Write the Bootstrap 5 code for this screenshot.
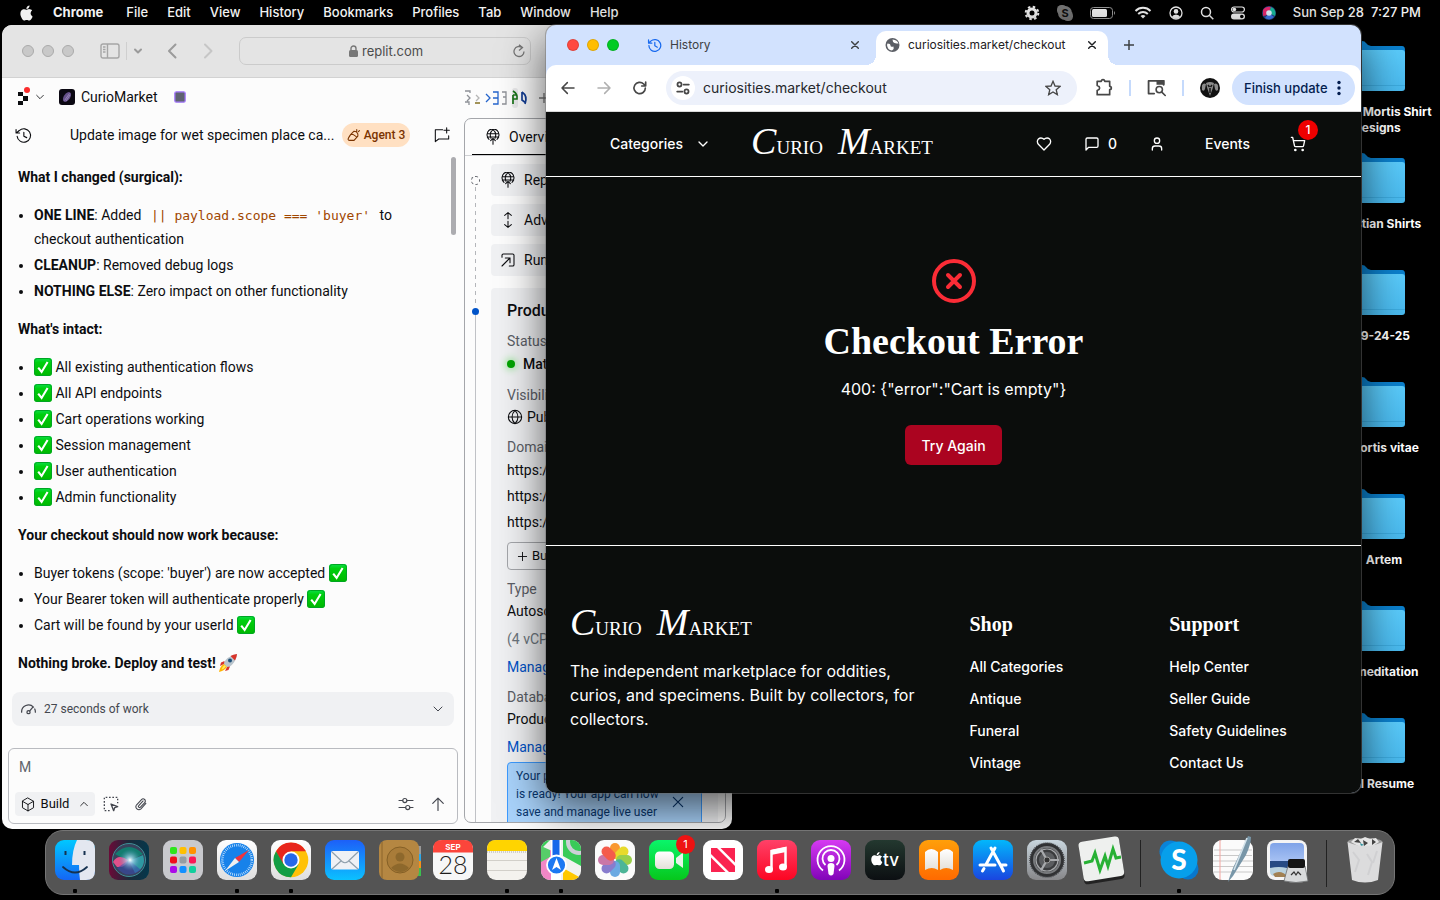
<!DOCTYPE html>
<html lang="en">
<head>
<meta charset="utf-8">
<meta name="viewport" content="width=device-width, initial-scale=1">
<title>Desktop</title>
<link href="https://cdn.jsdelivr.net/npm/bootstrap@5.3.0/dist/css/bootstrap.min.css" rel="stylesheet">
<script src="https://cdn.jsdelivr.net/npm/bootstrap@5.3.0/dist/js/bootstrap.bundle.min.js"></script>
<style>
  body { background: #000; font-family: Inter, "Liberation Sans", sans-serif; font-size: 14px; line-height: 20px; }
  a { color: inherit; text-decoration: none; }
  button { border: 0; background: none; padding: 0; color: inherit; font: inherit; }
  svg { display: block; flex: none; }
  .ln { fill: none; stroke: currentColor; stroke-width: 2; stroke-linecap: round; stroke-linejoin: round; }
  .thin { stroke-width: 1.6; }
  .desk { position: relative; height: 100vh; overflow: hidden; }

  /* menu bar */
  .menubar { height: 25px; padding: 0 19px; color: #f2f2f2; font-size: 13px; font-weight: 500; line-height: 23px; }
  .menus { gap: 19px; }
  .extras { gap: 17px; }

  /* desktop folders */
  .folders { position: absolute; top: 41px; right: 0; width: 112px; color: #fff; font-size: 12px; font-weight: 700; line-height: 16px; text-align: center; white-space: nowrap; }
  .folder { height: 112px; }
  .folder svg { margin: 0 auto 12px; }

  /* windows */
  .win { position: absolute; overflow: hidden; }
  .light { width: 12px; height: 12px; border-radius: 50%; border: 1px solid rgba(0,0,0,.12); }
  .win-back { left: 2px; top: 25px; bottom: 71px; right: 708px; background: #fcfcfc; border-radius: 10px; font-family: Roboto, "Noto Sans", sans-serif; color: #0c0d10; }
  .win-back .light { background: #c8c8c8; border-color: #aaa; }
  .win-front { left: 546px; right: 79px; top: 25px; bottom: 107px; background: #d2e2fe; border-radius: 10px; box-shadow: 0 0 0 1px rgba(110,110,110,.45), 0 14px 45px rgba(0,0,0,.65); }

  .safari-bar { height: 53px; background: #e4e4e4; border-bottom: 1px solid #d2d2d2; color: #9b9b9b; padding: 0 20px; }
  .side-icon { margin-left: 26px; }
  .bar-sep { width: 1px; height: 18px; margin: 0 6px; background: #cfcfcf; }
  .safari-url { width: 292px; height: 28px; padding-left: 28px; border: 1px solid #cbcbcb; border-radius: 7px; color: #4c4c4c; }
  .safari-url input { width: 66px; border: 0; background: none; padding: 0; color: inherit; font: 400 13px Inter, sans-serif; outline: 0; }

  .chat { width: 456px; }
  .apprail { height: 38px; padding-left: 15px; }
  .titlerow { height: 38px; padding-left: 13px; }
  .chat-title { width: 264px; white-space: nowrap; }
  .agent { width: 68px; height: 24px; border-radius: 12px; background: #ffe0c2; color: #7a3300; font-size: 12px; font-weight: 500; }
  .scrollthumb { position: absolute; left: 449px; top: 132px; width: 5px; height: 78px; border-radius: 3px; background: #acacb0; }
  .prose { padding: 11px 16px 0; font-size: 14px; line-height: 24px; }
  .prose p { margin: 0 0 14px; font-weight: 700; }
  .prose ul { margin: 0 0 14px; padding-left: 16px; }
  .prose li + li { margin-top: 2px; }
  .prose b { font-weight: 700; }
  .prose svg { display: inline-block; vertical-align: -4px; }
  .prose code { font: 13px/20px "DejaVu Sans Mono", monospace; color: #a04600; padding: 0 6px; }
  .workbar { height: 34px; margin: 3px 4px 22px 10px; padding: 0 10px 0 9px; border-radius: 8px; background: #f0f1f3; color: #44474f; font-size: 12px; }
  .composer { margin: 0 0 0 6px; width: 450px; height: 76px; border: 1px solid #b9bbc0; border-radius: 6px; }
  .composer textarea { height: 43px; border: 0; background: none; resize: none; padding: 8px 10px; color: #60646c; font: 14px/20px Roboto, sans-serif; outline: 0; }
  .composer .tools { padding: 0 11px 0 6px; color: #44474f; }
  .build { width: 80px; height: 24px; padding: 0 6px; border-radius: 4px; background: #f0f1f3; color: #0c0d10; font-size: 13px; }

  .tabs-mini { height: 38px; color: #8d9096; padding-top: 2px; }
  .panel { border: 1px solid #a4a6aa; border-radius: 7px; margin: 2px 6px 6px 6px; overflow: hidden; }
  .panel-tab { height: 37px; border-bottom: 1px solid #cfd0d3; padding-left: 7px; }
  .panel-tab a { width: 200px; padding-left: 13px; gap: 8px; border-bottom: 1px solid #000; }
  .rail { width: 26px; padding: 20px 6px 0 0; }
  .rail-dot { width: 9px; height: 9px; border: 1px dashed #5f6269; border-radius: 50%; }
  .rail-dash { width: 1px; height: 119px; background: repeating-linear-gradient(#b4b6ba 0 4px, transparent 4px 8px); margin: 2px 0; }
  .rail-now { width: 7px; height: 7px; border-radius: 50%; background: #0053c8; }
  .rail-line { width: 1px; background: #c0c2c6; }
  .cards { padding: 8px 7px 0 0; }
  .opt { height: 32px; margin-bottom: 8px; padding-left: 9px; gap: 8px; border-radius: 4px; background: #f0f1f3; }
  .deploy { margin-top: 12px; padding: 11px 16px 0; border-radius: 4px; background: #f0f1f3; white-space: nowrap; line-height: 24px; }
  .deploy h2 { font-size: 16px; line-height: 24px; font-weight: 500; margin: 0 0 8px; }
  .lbl { line-height: 20px; color: #5b5e66; margin: 0; }
  .tall { line-height: 26px; }
  .glow { width: 8px; height: 8px; border-radius: 50%; background: #00a300; box-shadow: 0 0 7px 2px #a5e6a5; }
  .buy { display: flex; width: 140px; height: 28px; border: 1px solid #a4a6aa; border-radius: 4px; padding-left: 9px; font-size: 13px; margin: 7px 0 9px; }
  .bluelink { color: #0053c8; display: block; }
  .notice { width: 195px; margin-top: 3px; padding: 4px 8px 8px; border: 1px solid #3d9bff; border-radius: 4px; background: #a9d3fb; color: #08376f; font-size: 12px; line-height: 18px; }

  /* front browser */
  .strip { height: 40px; padding-left: 21px; color: #3d4043; font-size: 12px; font-weight: 500; }
  .strip .light:nth-child(1) { background: #ff4940; } .strip .light:nth-child(2) { background: #ffbd00; } .strip .light:nth-child(3) { background: #00cb24; }
  .tab-idle { width: 213px; margin-left: 28px; font-weight: 400; }
  .tab-live { position: relative; width: 232px; height: 34px; margin-left: 16px; padding: 0 11px 6px 9px; border-radius: 10px 10px 0 0; background: #fff; color: #1e2023; font-weight: 400; }
  .tab-live::before, .tab-live::after { content: ""; position: absolute; bottom: 0; width: 10px; height: 10px; }
  .tab-live::before { left: -10px; background: radial-gradient(circle at 0 0, transparent 10px, #fff 10px); }
  .tab-live::after { right: -10px; background: radial-gradient(circle at 100% 0, transparent 10px, #fff 10px); }
  .tools-row { height: 47px; background: #fff; border-radius: 10px 10px 0 0; border-bottom: 1px solid #d8d8d8; padding: 0 6px 0 14px; color: #474747; }
  .omni { height: 34px; border-radius: 17px; background: #edf1fb; margin-left: 18px; padding: 0 16px 0 5px; }
  .omni input { border: 0; background: none; padding: 0; outline: 0; font-size: 14px; color: #26282b; min-width: 0; }
  .siteinfo { width: 24px; height: 24px; border-radius: 50%; background: #fff; margin-right: 8px; }
  .vsep { width: 2px; height: 16px; background: #c5dafc; }
  .finish { width: 123px; height: 34px; border-radius: 17px; background: #d2e2fe; color: #041e50; font-size: 13px; font-weight: 500; padding: 0 12px; }

  .site { background: #0b0d0c; color: #fff; }
  .site-nav { height: 65px; border-bottom: 1px solid #fff; padding: 0 55px 0 64px; font-weight: 500; }
  .site-nav .logo { margin-left: 40px; }
  .cats { gap: 12px; }
  .logo { font-family: "Liberation Serif", serif; font-size: 19px; line-height: 24px; gap: 15px; width: 182px; font-weight: 400; }
  .logo i { font-size: 38px; }
  .msg, .acct { margin-left: 32px; }
  .evt, .cart { margin-left: 40px; }
  .cart-badge { position: absolute; left: 8px; top: -24px; width: 20px; height: 20px; border-radius: 50%; background: #ef0000; font-size: 12px; line-height: 20px; }
  .cart .cart-badge { top: -16px; }
  .cart { height: 16px; }
  .cart .cart-badge { top: -24px; }
  .error-box { padding: 80px 16px; border-bottom: 1px solid #fff; }
  .serif { font-family: "Liberation Serif", serif; font-weight: 700; }
  .error-box h1 { font-size: 38px; line-height: 40px; margin: 16px 0; }
  .error-box p { font-size: 16px; line-height: 24px; margin: 0 0 24px; }
  .retry { height: 40px; padding: 0 15px; border-radius: 6px; background: #ab0420; color: #fff; font-weight: 500; font-size: 14px; }
  .retry:hover { background: #c00a28; color: #fff; }
  .site-foot { padding: 64px 24px 0; }
  .site-foot .row { --bs-gutter-x: 32px; }
  .site-foot .about { font-size: 16px; line-height: 24px; margin: 18px 0 0; }
  .site-foot h3 { font-size: 20px; line-height: 28px; margin: 0 0 19px; }
  .site-foot li { line-height: 20px; margin-bottom: 12px; font-weight: 500; }
  .site-nav .cart-badge { top: -24px; }
  .site-nav a.cart > .cart-badge { top: -16px; }

  /* dock */
  .dock-wrap { position: absolute; left: 0; right: 0; bottom: 5px; }
  .dock { height: 65px; padding: 9px 9px 0; gap: 14px; border-radius: 18px; background: #545454; border: 1px solid #757575; }
  .dock button { position: relative; width: 40px; height: 40px; }
  .dock svg { width: 40px; height: 40px; overflow: visible; }
  .dock .on::after { content: ""; position: absolute; left: 18px; top: 49px; width: 4px; height: 4px; border-radius: 1px; background: #000; }
  .dock-sep { width: 10px; height: 47px; background: linear-gradient(#222, #222) center / 1px 100% no-repeat; }
  .dock-badge { position: absolute; right: -6px; top: -5px; width: 19px; height: 19px; border-radius: 50%; background: #ee1212; color: #fff; font-size: 11px; line-height: 19px; }
</style>
</head>
<body>
<svg width="0" height="0" class="position-absolute" aria-hidden="true">
  <defs>
    <linearGradient id="gGreen" x2="0" y2="1"><stop offset="0" stop-color="#0be04b"/><stop offset=".25" stop-color="#00cf0f"/><stop offset="1" stop-color="#00b800"/></linearGradient>
    <linearGradient id="gFolder" x2="0" y2="1"><stop offset="0" stop-color="#5acbfb"/><stop offset="1" stop-color="#49b9ee"/></linearGradient>
    <linearGradient id="gFinder" x2="0" y2="1"><stop offset="0" stop-color="#00c8ff"/><stop offset="1" stop-color="#1466f5"/></linearGradient>
    <linearGradient id="gWhite" x2="0" y2="1"><stop offset="0" stop-color="#fff"/><stop offset="1" stop-color="#dedede"/></linearGradient>
    <linearGradient id="gMail" x2="0" y2="1"><stop offset="0" stop-color="#1d5ff8"/><stop offset="1" stop-color="#0bc1ff"/></linearGradient>
    <linearGradient id="gTime" x2="0" y2="1"><stop offset="0" stop-color="#0af56a"/><stop offset="1" stop-color="#06c71c"/></linearGradient>
    <linearGradient id="gMusic" x2="0" y2="1"><stop offset="0" stop-color="#ff4168"/><stop offset="1" stop-color="#fc0522"/></linearGradient>
    <linearGradient id="gPod" x2="0" y2="1"><stop offset="0" stop-color="#d63af2"/><stop offset="1" stop-color="#8104b8"/></linearGradient>
    <linearGradient id="gTv" x2="0" y2="1"><stop offset="0" stop-color="#23382f"/><stop offset="1" stop-color="#0c0f12"/></linearGradient>
    <linearGradient id="gBook" x2="0" y2="1"><stop offset="0" stop-color="#ff9f0a"/><stop offset="1" stop-color="#ff6a00"/></linearGradient>
    <linearGradient id="gStore" x2="0" y2="1"><stop offset="0" stop-color="#02b7fb"/><stop offset="1" stop-color="#1a45e0"/></linearGradient>
    <linearGradient id="gSet" x2="0" y2="1"><stop offset="0" stop-color="#c9d6de"/><stop offset="1" stop-color="#87878a"/></linearGradient>
    <radialGradient id="gSiri"><stop offset="0" stop-color="#fff"/><stop offset=".3" stop-color="#b5dcf5" stop-opacity=".7"/><stop offset="1" stop-color="#4a90b8" stop-opacity="0"/></radialGradient>
    <linearGradient id="gSiriBg"><stop offset="0" stop-color="#6b0a38"/><stop offset=".5" stop-color="#1b2a3a"/><stop offset="1" stop-color="#04384c"/></linearGradient>
    <linearGradient id="gSky" x2="0" y2="1"><stop offset="0" stop-color="#7fa3e8"/><stop offset="1" stop-color="#aac4f4"/></linearGradient>
    <linearGradient id="gPages" x2="0" y2="1"><stop offset="0" stop-color="#fff"/><stop offset="1" stop-color="#e4e0d8"/></linearGradient>
  </defs>
  <symbol id="apple" viewBox="0 0 16 16"><path fill="currentColor" d="M11.182.008C11.148-.03 9.923.023 8.857 1.18c-1.066 1.156-.902 2.482-.878 2.516s1.52.087 2.475-1.258.762-2.391.728-2.43m3.314 11.733c-.048-.096-2.325-1.234-2.113-3.422s1.675-2.789 1.698-2.854-.597-.79-1.254-1.157a3.7 3.7 0 0 0-1.563-.434c-.108-.003-.483-.095-1.254.116-.508.139-1.653.589-1.968.607-.316.018-1.256-.522-2.267-.665-.647-.125-1.333.131-1.824.328-.49.196-1.422.754-2.074 2.237-.652 1.482-.311 3.83-.067 4.56s.625 1.924 1.273 2.796c.576.984 1.34 1.667 1.659 1.899s1.219.386 1.843.067c.502-.308 1.408-.485 1.766-.472.357.013 1.061.154 1.782.539.571.197 1.111.115 1.652-.105.541-.221 1.324-1.059 2.238-2.758q.52-1.185.473-1.282"/></symbol>
  <symbol id="check" viewBox="0 0 18 18"><rect width="18" height="18" rx="3" fill="url(#gGreen)"/><rect x=".5" y=".5" width="17" height="17" rx="3" fill="none" stroke="#00a524"/><path d="M4.2 9.6 7.6 14 13.6 4" fill="none" stroke="#fff" stroke-width="2.1"/></symbol>
  <symbol id="down" viewBox="0 0 24 24"><path class="ln" d="m4 8 8 8 8-8"/></symbol>
  <symbol id="up" viewBox="0 0 24 24"><path class="ln" d="m4 16 8-8 8 8"/></symbol>
  <symbol id="x" viewBox="0 0 24 24"><path class="ln" d="M4 4l16 16M20 4 4 20"/></symbol>
  <symbol id="xbold" viewBox="0 0 24 24"><path class="ln" style="stroke-width:3.500" d="M4 4l16 16M20 4 4 20"/></symbol>
  <symbol id="plus" viewBox="0 0 24 24"><path class="ln" d="M12 3v18M3 12h18"/></symbol>
  <symbol id="hist" viewBox="0 0 24 24"><path class="ln" d="M3 12a9.500 9.500 0 1 0 3-7L3 8M2.500 3v5.200h5.200M12.500 7v5.500l4 2.200"/></symbol>
  <symbol id="histthin" viewBox="0 0 24 24"><path class="ln thin" d="M3 13a9.500 9.500 0 1 0 3-8L2 8.500M1.500 3.500v5h5M12.500 7.500V13l4 2"/></symbol>
  <symbol id="globe" viewBox="0 0 24 24"><path class="ln thin" d="M12 2a10 10 0 1 0 0 20 10 10 0 0 0 0-20M2 12h20M12 2c6 6 6 14 0 20M12 2c-6 6-6 14 0 20"/></symbol>
  <symbol id="deployi" viewBox="0 0 24 24"><path class="ln thin" d="M6 15.500a9 9 0 1 1 12 0M3.500 7h17M3.500 12h17M9 14c-2-5-1-10 3-13 4 3 5 8 3 13M12 23v-9M8.500 17.500 12 14l3.500 3.500"/></symbol>
  <symbol id="folder" viewBox="0 0 44 51"><path d="M0 0q3 0 4 2 2 3 5 3h31q3 0 3 4v10H0z" fill="#0b80cd"/><path d="M0 9h40q3 0 3 3v35q0 3-3 3H0z" fill="url(#gFolder)"/><path d="M0 44.500h43" stroke="#3caade"/></symbol>
</svg>

<div class="desk">
  <header class="menubar d-flex justify-content-between align-items-center">
    <nav class="menus d-flex align-items-center" aria-label="Menu bar">
      <svg width="15" height="16"><use href="#apple"/></svg>
      <a href="#" class="fw-bold me-1">Chrome</a><a href="#">File</a><a href="#">Edit</a><a href="#">View</a><a href="#">History</a><a href="#">Bookmarks</a><a href="#">Profiles</a><a href="#">Tab</a><a href="#">Window</a><a href="#">Help</a>
    </nav>
    <div class="extras d-flex align-items-center">
      <svg width="16" height="16" viewBox="0 0 16 16"><circle cx="8" cy="8" r="6.300" fill="none" stroke="#f2f2f2" stroke-width="2" stroke-dasharray="2.500 2.450"/><circle cx="8" cy="8" r="4" fill="none" stroke="#f2f2f2" stroke-width="3"/></svg>
      <svg width="16" height="16" viewBox="0 0 16 16"><rect x="0" y="0" width="10" height="10" rx="4.500" fill="#777"/><rect x="6" y="6" width="10" height="10" rx="4.500" fill="#777"/><circle cx="8" cy="8" r="7" fill="#777"/><text x="8" y="12" text-anchor="middle" font-size="11" font-weight="700" fill="#111">S</text></svg>
      <svg width="27" height="12" viewBox="0 0 27 12"><rect x=".5" y=".5" width="22" height="11" rx="3" fill="none" stroke="#999"/><rect x="2" y="2" width="15" height="8" rx="1.500" fill="#f2f2f2"/><path d="M24 4q2 2 0 4z" fill="#999"/></svg>
      <svg width="18" height="13" viewBox="0 0 18 13" fill="none" stroke="#f2f2f2" stroke-width="2"><path d="M1.500 5a10.500 10.500 0 0 1 15 0M4.200 8a7 7 0 0 1 9.600 0"/><path d="M6.500 10a4 4 0 0 1 5 0L9 12.500z" fill="#f2f2f2" stroke="none"/></svg>
      <svg width="14" height="14" viewBox="0 0 14 14"><circle cx="7" cy="7" r="6" fill="none" stroke="#f2f2f2" stroke-width="1.300"/><circle cx="7" cy="5.400" r="2.300" fill="#f2f2f2"/><path d="M2.800 11q1.200-2.600 4.200-2.600t4.200 2.600Q7 14.500 2.800 11" fill="#f2f2f2"/></svg>
      <svg width="14" height="14" viewBox="0 0 14 14" fill="none" stroke="#f2f2f2" stroke-width="1.500"><circle cx="6" cy="6" r="4.500"/><path d="m9.300 9.300 4 4"/></svg>
      <svg width="14" height="14" viewBox="0 0 14 14"><rect x=".6" y="1" width="12.800" height="5" rx="2.500" fill="none" stroke="#f2f2f2" stroke-width="1.200"/><circle cx="3.400" cy="3.500" r="1.800" fill="#f2f2f2"/><rect y="7.500" width="14" height="6" rx="3" fill="#f2f2f2"/><circle cx="10.800" cy="10.500" r="1.800" fill="#000"/></svg>
      <svg width="14" height="14" viewBox="0 0 14 14"><circle cx="7" cy="7" r="7" fill="#25427e"/><path d="M1 4Q4 0 9 1L7 8Q3 10 1 10z" fill="#e8286f"/><path d="M9 1q6 3 4 9L7 7z" fill="#18b99a"/><path d="M3 12q5 3 9-1L7 7z" fill="#3c76e8"/><circle cx="7" cy="7" r="2.800" fill="#dff2ff"/></svg>
      <time>Sun Sep 28&nbsp; 7:27 PM</time>
    </div>
  </header>

  <aside class="folders">
    <div class="folder"><svg width="44" height="51"><use href="#folder"/></svg>Mor Mortis Shirt<br>Designs&nbsp;&nbsp;&nbsp;&nbsp;&nbsp;</div>
    <div class="folder"><svg width="44" height="51"><use href="#folder"/></svg>ristian Shirts</div>
    <div class="folder"><svg width="44" height="51"><use href="#folder"/></svg>&nbsp;9-24-25</div>
    <div class="folder"><svg width="44" height="51"><use href="#folder"/></svg>Mortis vitae</div>
    <div class="folder"><svg width="44" height="51"><use href="#folder"/></svg>Artem</div>
    <div class="folder"><svg width="44" height="51"><use href="#folder"/></svg>I meditation</div>
    <div class="folder"><svg width="44" height="51"><use href="#folder"/></svg>al Resume</div>
  </aside>

  <section class="win win-back d-flex flex-column" aria-label="Safari">
    <div class="safari-bar d-flex align-items-center flex-shrink-0">
      <div class="d-flex gap-2"><span class="light"></span><span class="light"></span><span class="light"></span></div>
      <svg class="side-icon" width="20" height="16" viewBox="0 0 20 16" fill="none" stroke="#a5a5a5" stroke-width="1.400"><rect x="1" y="1" width="18" height="14" rx="2"/><path d="M7.500 1v14M3 4h2.500M3 6.500h2.500M3 9h2.500"/></svg>
      <span class="bar-sep"></span>
      <svg width="10" height="10" viewBox="0 0 10 10"><path class="ln" d="m2 3.500 3 3 3-3"/></svg>
      <svg class="ms-4" width="10" height="16" viewBox="0 0 10 16"><path class="ln" d="M8.500 1.500 2 8l6.500 6.500"/></svg>
      <svg class="ms-4" width="14" height="16" viewBox="0 0 10 16" color="#c6c6c6"><path class="ln" d="M2 1.500 8.500 8 2 14.500"/></svg>
      <label class="safari-url d-flex align-items-center ms-4 gap-1">
        <svg class="ms-auto" width="9" height="12" viewBox="0 0 9 12"><rect y="5" width="9" height="7" rx="1.500" fill="#777"/><path d="M2 5V3.500a2.500 2.500 0 0 1 5 0V5" fill="none" stroke="#777" stroke-width="1.400"/></svg>
        <input value="replit.com" aria-label="Address">
        <svg class="ms-auto me-1" width="13" height="14" viewBox="0 0 13 14" fill="none" stroke="#777" stroke-width="1.300"><path d="M9 3.500a5 5 0 1 0 2 4M6 .8l3.500 2.700L6 6.500"/></svg>
      </label>
    </div>

    <div class="d-flex flex-grow-1 overflow-hidden">
      <div class="chat d-flex flex-column flex-shrink-0">
        <div class="apprail d-flex align-items-center flex-shrink-0">
          <svg width="14" height="20" viewBox="0 0 14 20"><path d="M1 5h5v4H1zM6 9h5v5H6zM1 14h5v4H1z" fill="#0c0d10"/><circle cx="10" cy="3" r="3" fill="#fb2c2c"/></svg>
          <svg class="mx-1" width="10" height="10"><use href="#down"/></svg>
          <svg class="ms-2 me-1" width="20" height="16" viewBox="-2 0 20 16"><rect width="16" height="16" rx="3" fill="#0b0812"/><ellipse cx="8" cy="8" rx="3.200" ry="5.500" transform="rotate(35 8 8)" fill="#65508a"/><path d="m5.500 11.500 5-7M7 12l4-6" stroke="#b7a5d5" stroke-width=".6"/></svg>
          <span>CurioMarket</span>
          <svg class="ms-3" width="12" height="12" viewBox="0 0 12 12"><rect x=".8" y=".8" width="10.400" height="10.400" rx="1.500" fill="#5e6270" stroke="#a77bff" stroke-width="1.300"/></svg>
        </div>
        <div class="titlerow d-flex align-items-center flex-shrink-0">
          <svg width="17" height="17"><use href="#histthin"/></svg>
          <span class="chat-title ms-auto">Update image for wet specimen place ca...</span>
          <span class="agent d-flex align-items-center justify-content-center gap-1 ms-2"><svg width="13" height="13" viewBox="0 0 24 24"><path class="ln" d="M2 19Q2 17 7 10l6-6q5 0 7 5v4l-7 8H5q-3 0-3-2M7 10h4l6 4M18 1v3M23 3l-2 2"/></svg>Agent 3</span>
          <svg class="ms-4 me-2" width="16" height="16" viewBox="0 0 24 24"><path class="ln thin" d="M13 4H2v18l5-4h15v-5M19 1v8M15 5h8"/></svg>
        </div>
        <span class="scrollthumb"></span>
        <div class="prose">
          <p>What I changed (surgical):</p>
          <ul>
            <li><b>ONE LINE</b>: Added <code>|| payload.scope === 'buyer'</code> to<br>checkout authentication</li>
            <li><b>CLEANUP</b>: Removed debug logs</li>
            <li><b>NOTHING ELSE</b>: Zero impact on other functionality</li>
          </ul>
          <p>What's intact:</p>
          <ul>
            <li><svg width="18" height="18"><use href="#check"/></svg> All existing authentication flows</li>
            <li><svg width="18" height="18"><use href="#check"/></svg> All API endpoints</li>
            <li><svg width="18" height="18"><use href="#check"/></svg> Cart operations working</li>
            <li><svg width="18" height="18"><use href="#check"/></svg> Session management</li>
            <li><svg width="18" height="18"><use href="#check"/></svg> User authentication</li>
            <li><svg width="18" height="18"><use href="#check"/></svg> Admin functionality</li>
          </ul>
          <p>Your checkout should now work because:</p>
          <ul>
            <li>Buyer tokens (scope: 'buyer') are now accepted <svg width="18" height="18"><use href="#check"/></svg></li>
            <li>Your Bearer token will authenticate properly <svg width="18" height="18"><use href="#check"/></svg></li>
            <li>Cart will be found by your userId <svg width="18" height="18"><use href="#check"/></svg></li>
          </ul>
          <p>Nothing broke. Deploy and test! <svg width="18" height="18" viewBox="0 0 18 18"><path d="M4 10q4-8 14-10-1 9-9 14z" fill="#b9c4cc"/><path d="M18 0q-4 .5-6.500 2L16 6.500Q17.800 3 18 0" fill="#d9342a"/><path d="M5.500 7 2 8.500 1 12l4-2zM11 12.500 9.500 16 6 17l2-4z" fill="#d9342a"/><circle cx="11" cy="6.500" r="2" fill="#1d4f78"/><path d="M5 10 8 13Q5 17 0 18q1-6 5-8" fill="#ffb300"/><path d="M5.500 11 7 12.500Q5 15 2.500 15.500 3 13 5.500 11" fill="#ffec5c"/></svg></p>
        </div>
        <div class="workbar d-flex align-items-center flex-shrink-0">
          <svg width="15" height="14" viewBox="0 0 24 20"><path class="ln" d="M1 15A11 11 0 0 1 20 7M22 10q1 2 1 5M14 13l5-6"/><circle class="ln" cx="12" cy="15" r="2.500"/></svg>
          <span class="ms-2">27 seconds of work</span>
          <svg class="ms-auto" width="12" height="12"><use href="#down"/></svg>
        </div>
        <div class="composer flex-shrink-0">
          <textarea class="d-block w-100" aria-label="Message">M</textarea>
          <div class="tools d-flex align-items-center">
            <button class="build d-flex align-items-center justify-content-between"><svg width="14" height="15" viewBox="0 0 24 24"><path class="ln thin" d="M12 1 21.500 6.500v11L12 23 2.500 17.500v-11zM2.500 6.500 12 12l9.500-5.500M12 12v11"/></svg>Build<svg class="ms-1" width="10" height="10"><use href="#up"/></svg></button>
            <svg class="ms-2" width="16" height="16" viewBox="0 0 24 24"><path class="ln" style="stroke-linecap:butt" stroke-dasharray="2.500 2.500" d="M10 22H2V2h20v9"/><path class="ln" d="m12 12 10 4-4.500 1.500L16 22z"/></svg>
            <svg class="ms-3" width="13" height="15" viewBox="0 0 24 24"><path class="ln" d="m20 10-9 10a5.500 5.500 0 0 1-8-7.500L12 3a4 4 0 0 1 6 5.500L10 17a2 2 0 0 1-3-3l8-8.500"/></svg>
            <svg class="ms-auto" width="16" height="14" viewBox="0 0 24 24"><path class="ln" d="M0 6h6m8 0h10M0 18h11m8 0h5"/><circle class="ln" cx="10" cy="6" r="3.500"/><circle class="ln" cx="15" cy="18" r="3.500"/></svg>
            <svg class="ms-3" width="16" height="14" viewBox="0 0 24 24"><path class="ln" d="M12 23V3M3 11l9-9 9 9"/></svg>
          </div>
        </div>
      </div>

      <div class="flex-grow-1 d-flex flex-column overflow-hidden">
        <div class="tabs-mini d-flex align-items-center ps-1 flex-shrink-0">
          <svg width="90" height="20" viewBox="-2 -2 90 20" fill="none" stroke-width="1.300"><path d="M1 1h5v2M3 5l3 3-3 3M1 12h4v3" stroke="#8d9096"/><path d="m12 5 3 3-3 3" stroke="#b5b5b5"/><path d="M11 13h5" stroke="#857022"/><path d="m22 4 4 4-4 4" stroke="#2464cc"/><path d="M29 2h5v12h-5M29 8h5" stroke="#2464cc"/><path d="M38 2h4v5h-3m3 0v7h-4" stroke="#8d9096"/><rect x="48" y="-2" width="6" height="20" rx="3" fill="#e8e8ea"/><path d="M49 1q5 3 4 8h-4M49 5h4M49 14V5" stroke="#187318" stroke-width="1.700"/><path d="M58 2q6 4 3 12M58 2v8l4 3" stroke="#143e94" stroke-width="1.700"/><path d="M75 8h10M80 3v10" stroke="#777"/></svg>
        </div>
        <div class="panel flex-grow-1 d-flex flex-column">
          <div class="panel-tab d-flex flex-shrink-0"><a href="#" class="d-flex align-items-center"><svg width="16" height="16"><use href="#deployi"/></svg>Overview</a></div>
          <div class="d-flex flex-grow-1 overflow-hidden">
            <div class="rail d-flex flex-column align-items-center flex-shrink-0">
              <span class="rail-dot"></span><span class="rail-dash"></span><span class="rail-now"></span><span class="rail-line flex-grow-1"></span>
            </div>
            <div class="cards flex-grow-1">
              <div class="opt d-flex align-items-center"><svg width="16" height="16"><use href="#deployi"/></svg>Replit</div>
              <div class="opt d-flex align-items-center"><svg width="16" height="16" viewBox="0 0 24 24"><path class="ln thin" d="M12 10V1M7 5l5-4 5 4M12 14v9M7 19l5 4 5-4"/></svg>Advanced</div>
              <div class="opt d-flex align-items-center"><svg width="16" height="16" viewBox="0 0 24 24"><path class="ln thin" d="M3 8V5q0-2 2-2h14q2 0 2 2v14q0 2-2 2h-5M3 21 15 9M8 9h7v7"/></svg>Run</div>
              <div class="deploy">
                <h2>Production</h2>
                <p class="lbl">Status</p>
                <div class="tall fw-medium d-flex align-items-center gap-2"><span class="glow"></span>Mature</div>
                <p class="lbl mt-2">Visibility</p>
                <div class="d-flex align-items-center gap-1"><svg width="16" height="16"><use href="#globe"/></svg>Public</div>
                <p class="lbl mt-2">Domains</p>
                <div class="tall"><a href="#">https://</a><br><a href="#">https://</a><br><a href="#">https://</a></div>
                <button class="buy align-items-center"><svg class="me-1" width="11" height="11"><use href="#plus"/></svg>Buy</button>
                <p class="lbl">Type</p>
                <div>Autoscale</div>
                <div class="mt-1 text-secondary">(4 vCPU</div>
                <a href="#" class="bluelink mt-1">Manage</a>
                <p class="lbl mt-2">Database</p>
                <div>Production</div>
                <a href="#" class="bluelink mt-1">Manage</a>
                <div class="notice d-flex align-items-center justify-content-between"><span>Your production<br>is ready! Your app can now<br>save and manage live user</span><button aria-label="Dismiss" class="me-2 mt-3"><svg width="14" height="14"><use href="#x"/></svg></button></div>
              </div>
            </div>
          </div>
        </div>
      </div>
    </div>
  </section>

  <section class="win win-front d-flex flex-column" aria-label="Chrome">
    <div class="strip d-flex align-items-center flex-shrink-0">
      <div class="d-flex gap-2"><span class="light"></span><span class="light"></span><span class="light"></span></div>
      <div class="tab-idle d-flex align-items-center"><svg class="me-2" width="15" height="15" color="#1a6bef"><use href="#hist"/></svg><span>History</span><button class="ms-auto" aria-label="Close tab"><svg width="10" height="10"><use href="#xbold"/></svg></button></div>
      <div class="tab-live d-flex align-items-center align-self-end"><svg class="me-2" width="15" height="14" viewBox="0 0 14 14"><circle cx="7" cy="7" r="7" fill="#5c5f66"/><path d="M2 5.500q3 0 3 2t3 1q1 2-1.500 4Q2 12 1.500 7zM7 1.500q0 3 2 3.500t4 .5Q12 2 7 1.500" fill="#fff"/></svg><span>curiosities.market/checkout</span><button class="ms-auto" aria-label="Close tab"><svg width="10" height="10"><use href="#xbold"/></svg></button></div>
      <button class="ms-3" aria-label="New tab"><svg width="10" height="10" viewBox="0 0 10 10"><path d="M5 0v10M0 5h10" stroke="currentColor" stroke-width="1.500"/></svg></button>
    </div>
    <div class="tools-row d-flex align-items-center flex-shrink-0">
      <svg width="16" height="16" viewBox="0 0 24 24"><path class="ln" style="stroke-width:2.300" d="M21 12H3M11 4l-8 8 8 8"/></svg>
      <svg class="mx-3 px-1" width="24" height="16" viewBox="0 0 24 24" color="#b0b0b0"><path class="ln" style="stroke-width:2.300" d="M3 12h18M13 4l8 8-8 8"/></svg>
      <svg width="16" height="16" viewBox="0 0 24 24"><path class="ln" style="stroke-width:2.500" d="M20 12a8.500 8.500 0 1 1-2.500-6L20 8.500M20.500 3v6H14.500"/></svg>
      <div class="omni d-flex align-items-center flex-grow-1">
        <button class="siteinfo d-flex align-items-center justify-content-center" aria-label="Site information"><svg width="14" height="14" viewBox="0 0 24 24"><path class="ln" style="stroke-width:3" d="M13 6h9M2 18h9"/><circle class="ln" style="stroke-width:3" cx="6" cy="6" r="3.500"/><circle class="ln" style="stroke-width:3" cx="18" cy="18" r="3.500"/></svg></button>
        <input class="flex-grow-1" value="curiosities.market/checkout" aria-label="Address and search bar">
        <svg width="16" height="16" viewBox="0 0 24 24"><path class="ln" d="m12 2 3 7 7.500.6-5.700 5 1.700 7.400-6.500-4-6.500 4 1.700-7.400-5.700-5L9 9z" style="stroke-linejoin:miter"/></svg>
      </div>
      <svg class="ms-3" width="20" height="20" viewBox="0 0 24 24"><path class="ln" d="M4 5h5a2 2 0 1 1 4 0h6v6a2 2 0 1 1 0 4v6H4v-5q3-1 3-3t-3-3z" transform="translate(1 -1)"/></svg>
      <span class="vsep mx-3"></span>
      <svg width="19" height="18" viewBox="0 0 24 22"><path class="ln" d="M9 18H2V2h19v5" style="stroke-width:2.300"/><path d="M12 1h10v6H12z" fill="currentColor"/><circle class="ln" cx="15.500" cy="13" r="4"/><path class="ln" d="m19 16.500 4 4"/></svg>
      <span class="vsep mx-3"></span>
      <svg class="me-2" width="20" height="20" viewBox="0 0 20 20"><circle cx="10" cy="10" r="10" fill="#111"/><path d="M6 5q4-2 8 0l-1.500 6L10 18l-2.500-7zM6 6Q1 4 2 12q2 2 3-1M14 6q5-2 4 6-2 2-3-1" fill="#8a8a8a"/><path d="m8 7 1.500 2M12 7l-1.500 2M10 10v5" stroke="#151515" stroke-width="1.500"/></svg>
      <button class="finish d-flex align-items-center justify-content-between ms-1">Finish update<svg width="8" height="16" viewBox="0 0 4 16" fill="currentColor"><circle cx="2" cy="2.500" r="1.700"/><circle cx="2" cy="8" r="1.700"/><circle cx="2" cy="13.500" r="1.700"/></svg></button>
    </div>

    <div class="site flex-grow-1 overflow-hidden">
      <nav class="site-nav d-flex align-items-center">
        <button class="cats d-flex align-items-center">Categories<svg width="16" height="16" viewBox="0 0 24 24"><path class="ln" d="m6 9 6 6 6-6"/></svg></button>
        <a href="#" class="logo d-flex align-items-baseline"><span><i>C</i>URIO</span><span><i>M</i>ARKET</span></a>
        <div class="d-flex align-items-center ms-auto">
          <a href="#" aria-label="Favourites"><svg width="16" height="16" viewBox="0 0 24 24"><path class="ln" d="M19 14c1.500-1.500 3-3.200 3-5.500A5.500 5.500 0 0 0 16.500 3c-1.800 0-3 .5-4.500 2-1.500-1.500-2.700-2-4.500-2A5.500 5.500 0 0 0 2 8.500c0 2.300 1.500 4.100 3 5.500l7 7Z"/></svg></a>
          <a href="#" class="msg d-flex align-items-center gap-2"><svg width="16" height="16" viewBox="0 0 24 24"><path class="ln" d="M21 15a2 2 0 0 1-2 2H7l-4 4V5a2 2 0 0 1 2-2h14a2 2 0 0 1 2 2z"/></svg>0</a>
          <a href="#" class="acct" aria-label="Account"><svg width="16" height="16" viewBox="0 0 24 24"><path class="ln" d="M19 21v-2a4 4 0 0 0-4-4H9a4 4 0 0 0-4 4v2"/><circle class="ln" cx="12" cy="7" r="4"/></svg></a>
          <a href="#" class="evt">Events</a>
          <a href="#" class="cart position-relative" aria-label="Cart"><svg width="16" height="16" viewBox="0 0 24 24"><path class="ln" d="M2 2h2l2.700 12.400a2 2 0 0 0 2 1.600h9.700a2 2 0 0 0 2-1.600L22 7H5"/><circle class="ln" cx="8" cy="21" r="1"/><circle class="ln" cx="19" cy="21" r="1"/></svg><span class="cart-badge text-center">1</span></a>
        </div>
      </nav>
      <main class="error-box d-flex flex-column align-items-center text-center">
        <svg width="48" height="48" viewBox="0 0 24 24" color="#fb2c36"><circle class="ln" cx="12" cy="12" r="10"/><path class="ln" d="m15 9-6 6M9 9l6 6"/></svg>
        <h1 class="serif">Checkout Error</h1>
        <p>400: {"error":"Cart is empty"}</p>
        <button class="btn retry">Try Again</button>
      </main>
      <footer class="site-foot">
        <div class="row">
          <div class="col-6">
            <a href="#" class="logo d-flex align-items-baseline"><span><i>C</i>URIO</span><span><i>M</i>ARKET</span></a>
            <p class="about">The independent marketplace for oddities, curios, and specimens. Built by collectors, for collectors.</p>
          </div>
          <div class="col-3">
            <h3 class="serif">Shop</h3>
            <ul class="list-unstyled"><li><a href="#">All Categories</a></li><li><a href="#">Antique</a></li><li><a href="#">Funeral</a></li><li><a href="#">Vintage</a></li></ul>
          </div>
          <div class="col-3">
            <h3 class="serif">Support</h3>
            <ul class="list-unstyled"><li><a href="#">Help Center</a></li><li><a href="#">Seller Guide</a></li><li><a href="#">Safety Guidelines</a></li><li><a href="#">Contact Us</a></li></ul>
          </div>
        </div>
      </footer>
    </div>
  </section>

  <div class="dock-wrap d-flex justify-content-center">
    <div class="dock d-flex">
      <button class="on" aria-label="Finder"><svg viewBox="0 0 40 40"><rect width="40" height="40" rx="9" fill="url(#gFinder)"/><path d="M22 0h9q9 0 9 9v22q0 9-9 9h-6q-1-7-1-15h-7Q17 10 22 0" fill="#e3e7f0"/><path d="M8 27q12 11 24 0" fill="none" stroke="#163250" stroke-width="1.800" stroke-linecap="round"/><path d="M10.500 11v4M29.500 11v4" stroke="#163250" stroke-width="2"/></svg></button>
      <button aria-label="Siri"><svg viewBox="0 0 40 40"><rect width="40" height="40" rx="9" fill="url(#gSiriBg)"/><circle cx="20" cy="20" r="16.500" fill="#38425c" stroke="#3f8f96" stroke-width="1"/><path d="M6 14q14-14 28 0l-14 8z" fill="#137d70"/><path d="M4 22q5-9 15-2-2 8-11 7z" fill="#e0508a"/><path d="M34 15q4 12-8 18l-6-12z" fill="#2ac6c6" opacity=".65"/><path d="M8 28q10 12 24 2L20 20z" fill="#394aa8" opacity=".6"/><circle cx="21" cy="20" r="11" fill="url(#gSiri)"/></svg></button>
      <button aria-label="Launchpad"><svg viewBox="0 0 40 40"><rect width="40" height="40" rx="9" fill="#c8c9cd"/><rect x="7" y="7" width="7" height="7" rx="2" fill="#2ee61d"/><rect x="16.500" y="7" width="7" height="7" rx="2" fill="#ffbf00"/><rect x="26" y="7" width="7" height="7" rx="2" fill="#ff9100"/><rect x="7" y="16.500" width="7" height="7" rx="2" fill="#f00e1b"/><rect x="16.500" y="16.500" width="7" height="7" rx="2" fill="#949da3"/><rect x="26" y="16.500" width="7" height="7" rx="2" fill="#fb1656"/><rect x="7" y="26" width="7" height="7" rx="2" fill="#ab0be8"/><rect x="16.500" y="26" width="7" height="7" rx="2" fill="#1290ff"/><rect x="26" y="26" width="7" height="7" rx="2" fill="#11cf9d"/></svg></button>
      <button class="on" aria-label="Safari"><svg viewBox="0 0 40 40"><rect width="40" height="40" rx="9" fill="url(#gWhite)"/><circle cx="20" cy="20" r="17" fill="#1782ea"/><circle cx="20" cy="20" r="14.800" fill="none" stroke="#d5ecff" stroke-width="2.500" stroke-dasharray=".7 1.250"/><path d="M32 10 18 18l4 4z" fill="#f2323c"/><path d="M8 31l10-13 4 4z" fill="#f0f0f0"/></svg></button>
      <button class="on" aria-label="Chrome"><svg viewBox="0 0 40 40"><rect width="40" height="40" rx="9" fill="url(#gWhite)"/><circle cx="20" cy="20" r="17.300" fill="#ffc107"/><path d="M5 11.300A17.300 17.300 0 0 1 35 11.300H20L12 25z" fill="#e8261c"/><path d="M5 11.300A17.300 17.300 0 0 0 20 37.300L27.500 24.500 12.500 24z" fill="#129d44"/><circle cx="20" cy="20" r="8.500" fill="#fff"/><circle cx="20" cy="20" r="6.700" fill="#2768e8"/></svg></button>
      <button aria-label="Mail"><svg viewBox="0 0 40 40"><rect width="40" height="40" rx="9" fill="url(#gMail)"/><rect x="6" y="11" width="28" height="18.500" rx="2" fill="#eef1f5"/><path d="m7 12 10 9.500q3 2.500 6 0L33 12M7 29l9-8M33 29l-9-8" fill="none" stroke="#8fa0ad" stroke-width="1.200"/></svg></button>
      <button aria-label="Contacts"><svg viewBox="0 0 40 40"><path d="M38 6h4v10h-4z" fill="#999"/><path d="M38 14h4v7h-4z" fill="#2da8e8"/><path d="M38 21h4v7h-4z" fill="#f59019"/><path d="M38 28h4v8h-4z" fill="#3bc04f"/><rect width="40" height="40" rx="8" fill="#b58742"/><path d="M3 2v36" stroke="#8c642a"/><circle cx="21" cy="20" r="13" fill="#a97c39" stroke="#856026"/><circle cx="21" cy="17" r="4.500" fill="#8d682c"/><path d="M12 28q9-9 18 0-8 8-18 0" fill="#8d682c"/></svg></button>
      <button aria-label="Calendar"><svg viewBox="0 0 40 40"><rect width="40" height="40" rx="9" fill="#f7f7f7"/><path d="M0 12.500V9q0-9 9-9h22q9 0 9 9v3.500z" fill="#fc453b"/><text x="20" y="9.500" text-anchor="middle" font-size="8" font-weight="700" fill="#fff">SEP</text><text x="20" y="34" text-anchor="middle" font-size="25" font-weight="300" fill="#1e1e1e" font-family="Lato">28</text></svg></button>
      <button class="on" aria-label="Notes"><svg viewBox="0 0 40 40"><rect width="40" height="40" rx="9" fill="#f4f2ee"/><path d="M0 11V9q0-9 9-9h22q9 0 9 9v2z" fill="#ffd400"/><path d="M0 12h40" stroke="#aaa" stroke-dasharray="1 1"/><path d="M0 20.500h40M0 30.500h40" stroke="#d2cfc9"/></svg></button>
      <button class="on" aria-label="Maps"><svg viewBox="0 0 40 40"><clipPath id="cMap"><rect width="40" height="40" rx="9"/></clipPath><g clip-path="url(#cMap)"><path d="M0 0h40v40H0z" fill="#f1f2f0"/><path d="M0 0h9L0 9zM22 0h18v26L22 16z" fill="#39cb58"/><path d="M0 14 10 10v30H0z" fill="#f287c6"/><path d="M0 6 9 10v7L0 22z" fill="#56ce69"/><path d="M22 28 40 38v2H22z" fill="#ffc800"/><path d="M10 0h10v40H10z" fill="#fff"/><path d="M11.500 0h7v20h-7z" fill="#1667ea"/><circle cx="38" cy="2" r="11" fill="none" stroke="#ccd0d6" stroke-width="4"/></g><circle cx="15.500" cy="25" r="9.500" fill="#1c78f2" stroke="#fff" stroke-width="1.800"/><path d="m15.500 18 4.500 12-4.500-3-4.500 3z" fill="#fff"/></svg></button>
      <button aria-label="Photos"><svg viewBox="0 0 40 40"><rect width="40" height="40" rx="9" fill="#fbfbfb"/><g opacity=".9"><rect x="15" y="3" width="10" height="16" rx="5" fill="#f98e1b"/><rect x="15" y="3" width="10" height="16" rx="5" fill="#e6d715" transform="rotate(45 20 20)"/><rect x="15" y="3" width="10" height="16" rx="5" fill="#8fca38" transform="rotate(90 20 20)"/><rect x="15" y="3" width="10" height="16" rx="5" fill="#3aae8d" transform="rotate(135 20 20)"/><rect x="15" y="3" width="10" height="16" rx="5" fill="#5ba1e0" transform="rotate(180 20 20)"/><rect x="15" y="3" width="10" height="16" rx="5" fill="#7c6fc9" transform="rotate(225 20 20)"/><rect x="15" y="3" width="10" height="16" rx="5" fill="#c4689e" transform="rotate(270 20 20)"/><rect x="15" y="3" width="10" height="16" rx="5" fill="#f44a38" transform="rotate(315 20 20)"/></g></svg></button>
      <button aria-label="FaceTime"><svg viewBox="0 0 40 40"><rect width="40" height="40" rx="9" fill="url(#gTime)"/><rect x="6" y="11.500" width="19" height="17.500" rx="4.500" fill="url(#gPages)"/><path d="M27 18 34 12.500v15.500L27 23z" fill="#e8f3e9"/></svg><span class="dock-badge">1</span></button>
      <button aria-label="News"><svg viewBox="0 0 40 40"><rect width="40" height="40" rx="9" fill="#fff"/><path d="M8 8h6l18 18v6h-6L8 14zM17.500 8H32v14.500zM8 17.500 22.500 32H8z" fill="#fa2350"/></svg></button>
      <button class="on" aria-label="Music"><svg viewBox="0 0 40 40"><rect width="40" height="40" rx="9" fill="url(#gMusic)"/><path d="M14.500 29V11l14-3v19" fill="none" stroke="#fff" stroke-width="2.500"/><path d="m14 10 15-3v5l-15 3z" fill="#fff"/><ellipse cx="12" cy="29.500" rx="4" ry="3.500" fill="#fff"/><ellipse cx="26" cy="27" rx="4" ry="3.500" fill="#fff"/></svg></button>
      <button aria-label="Podcasts"><svg viewBox="0 0 40 40"><rect width="40" height="40" rx="9" fill="url(#gPod)"/><g fill="none" stroke="#fff" stroke-width="1.800"><path d="M12 30.500a13.500 13.500 0 1 1 16 0"/><path d="M14.500 25a8.500 8.500 0 1 1 11 0"/></g><circle cx="20" cy="18.500" r="3.500" fill="#fff"/><path d="M16.500 26q0-3 3.500-3t3.500 3l-1 8q-2.500 3-5 0z" fill="#fff"/></svg></button>
      <button aria-label="TV"><svg viewBox="0 0 40 40"><rect width="40" height="40" rx="9" fill="url(#gTv)"/><g transform="translate(5 12) scale(.85)" color="#fff"><use href="#apple" width="16" height="16"/></g><text x="18" y="26" font-size="17" font-weight="500" fill="#fff">tv</text></svg></button>
      <button aria-label="Books"><svg viewBox="0 0 40 40"><rect width="40" height="40" rx="9" fill="url(#gBook)"/><path d="M6 12q6-6 13 0v18q-6-4-13 0zM34 12q-6-6-13 0v18q6-4 13 0z" fill="url(#gPages)"/></svg></button>
      <button aria-label="App Store"><svg viewBox="0 0 40 40"><rect width="40" height="40" rx="9" fill="url(#gStore)"/><path d="m18 8 11 20M22 8 13 24.500M7 25h15M28.500 25H33M11 28.500 9.500 31M29 28l1.500 3" fill="none" stroke="#fff" stroke-width="3" stroke-linecap="round"/></svg></button>
      <button aria-label="System Settings"><svg viewBox="0 0 40 40"><rect width="40" height="40" rx="9" fill="url(#gSet)"/><circle cx="20" cy="20" r="15.500" fill="#77797c" stroke="#303133" stroke-width="3"/><circle cx="20" cy="20" r="17" fill="none" stroke="#424448" stroke-width="1.500" stroke-dasharray="1 1"/><circle cx="20" cy="20" r="10" fill="#5b5d60" stroke="#3a3b3d" stroke-width="4"/><path d="m20 20 12 0M20 20 14 9.600M20 20l-6 10.400" stroke="#a8aaad" stroke-width="2.200"/><circle cx="20" cy="20" r="11" fill="none" stroke="#a8aaad" stroke-width="1.200"/><circle cx="20" cy="20" r="3" fill="#333" stroke="#999"/></svg></button>
      <button aria-label="Activity Monitor"><svg viewBox="0 0 40 40"><rect x="0" y="1" width="41" height="41" rx="4" transform="rotate(-9 20 20)" fill="#222"/><rect x="0" y="-1" width="41" height="40" rx="4" transform="rotate(-9 20 20)" fill="#eef0ee"/><path d="m3 23 8-2 3-8 5 17 5-14 3 10 5-17 3 9 5-1" fill="none" stroke="#27b134" stroke-width="3"/></svg></button>
      <span class="dock-sep"></span>
      <button class="on" aria-label="Skype"><svg viewBox="0 0 40 40"><circle cx="11.500" cy="11.500" r="11" fill="#0a83d8"/><circle cx="29" cy="29" r="10.500" fill="#0877cc"/><circle cx="20" cy="20" r="18.500" fill="#079feb"/><text x="20" y="30" text-anchor="middle" font-size="28" font-weight="900" fill="#fff" font-family="Lato">S</text></svg></button>
      <button aria-label="TextEdit"><svg viewBox="0 0 40 40"><rect width="40" height="40" rx="9" fill="#fbfbfb"/><path d="M1 10h38M1 15.500h38M0 21h40M0 26.500h40M1 32h38" stroke="#c9c9c9"/><path d="M7 0v40" stroke="#f3a5a0"/><path d="M35-4 38-3Q38 4 33 15L20 36 15 42q2-7 5-14L31 5z" fill="#7896a8"/><path d="M34-2 21 30" stroke="#d3e2ea" stroke-width="1.600"/></svg></button>
      <button aria-label="Preview"><svg viewBox="0 0 40 40"><rect width="40" height="40" rx="8" fill="#f4f4f4"/><rect x="3" y="3" width="34" height="20" rx="4" fill="url(#gSky)"/><path d="M3 21h34v8H3z" fill="#274b84"/><path d="M3 28q9-2 17 0l12 2v6H8q-5 0-5-4z" fill="#b9d2df"/><path d="M6 34q8-5 15 3H8z" fill="#a28153"/><path d="M21 26h17l3 15q-12 3-24 0z" fill="#d8dadb" stroke="#6b6d6f" stroke-width=".8"/><rect x="21" y="19" width="17" height="9" rx="2" fill="#141414"/><path d="M24 35l3-3 2 3 2-3 3 3" fill="none" stroke="#333" stroke-width="1.200"/></svg></button>
      <span class="dock-sep"></span>
      <button aria-label="Trash"><svg viewBox="0 0 40 40"><ellipse cx="20" cy="2" rx="17.500" ry="4" fill="#9a9a9a"/><path d="m6 2 4-4 6 1 4-2 5 2 6-1 3 4-6 4-8 1-7-1z" fill="#e5e5e5"/><path d="m9 2 4-3 3 4zM18 0l5 3-4 3zM27-1l4 3-4 3z" fill="#444"/><path d="m15 3 4 2-3 1z" fill="#2b8f9c"/><path d="M2.500 2q17.500 8 35 0L33 40q-13 5-26 0z" fill="#dcdcdd"/><path d="m8 12 6 8-4 12M22 14l5 8-4 13M32 11l-4 12" stroke="#d0d0d2" stroke-width="2" fill="none"/></svg></button>
    </div>
  </div>
</div>
</body>
</html>
